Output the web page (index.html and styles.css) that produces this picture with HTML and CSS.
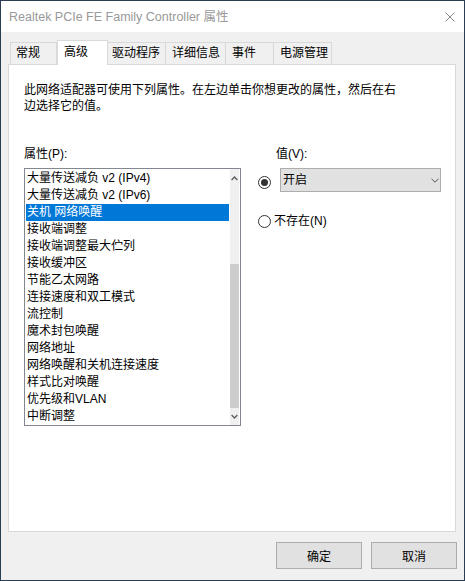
FILE: index.html
```html
<!DOCTYPE html>
<html lang="zh-CN">
<head>
<meta charset="utf-8">
<title>Realtek PCIe FE Family Controller 属性</title>
<link rel="stylesheet" href="styles.css">
</head>
<body>
<div class="window">
  <div class="titlebar">
    <span class="title">Realtek PCIe FE Family Controller 属性</span>
    <svg class="close" width="10" height="10" viewBox="0 0 10 10"><path d="M0.5 0.5 L9.5 9.5 M9.5 0.5 L0.5 9.5" stroke="#8a8a8a" stroke-width="1" fill="none"/></svg>
  </div>
  <div class="body">
    <div class="tabs">
      <div class="tab tab-general">常规</div>
      <div class="tab tab-advanced selected">高级</div>
      <div class="tab tab-driver">驱动程序</div>
      <div class="tab tab-details">详细信息</div>
      <div class="tab tab-events">事件</div>
      <div class="tab tab-power">电源管理</div>
    </div>
    <div class="panel">
      <p class="desc">此网络适配器可使用下列属性。在左边单击你想更改的属性，然后在右边选择它的值。</p>
      <div class="props">
        <div class="col-left">
          <div class="label">属性(P):</div>
          <div class="listbox">
            <div class="items">
              <div class="item">大量传送减负 v2 (IPv4)</div>
              <div class="item">大量传送减负 v2 (IPv6)</div>
              <div class="item sel">关机 网络唤醒</div>
              <div class="item">接收端调整</div>
              <div class="item">接收端调整最大伫列</div>
              <div class="item">接收缓冲区</div>
              <div class="item">节能乙太网路</div>
              <div class="item">连接速度和双工模式</div>
              <div class="item">流控制</div>
              <div class="item">魔术封包唤醒</div>
              <div class="item">网络地址</div>
              <div class="item">网络唤醒和关机连接速度</div>
              <div class="item">样式比对唤醒</div>
              <div class="item">优先级和VLAN</div>
              <div class="item">中断调整</div>
            </div>
            <div class="scrollbar">
              <div class="sb-btn sb-up"><svg width="7" height="5" viewBox="0 0 7 5"><polyline points="0.6,4 3.5,1 6.4,4" stroke="#606060" stroke-width="1.4" fill="none"/></svg></div>
              <div class="sb-track"><div class="sb-thumb"></div></div>
              <div class="sb-btn sb-down"><svg width="7" height="5" viewBox="0 0 7 5"><polyline points="0.6,1 3.5,4 6.4,1" stroke="#606060" stroke-width="1.4" fill="none"/></svg></div>
            </div>
          </div>
        </div>
        <div class="col-right">
          <div class="label value-label">值(V):</div>
          <div class="row row-value">
            <span class="radio checked"><span class="dot"></span></span>
            <div class="combo">
              <span>开启</span>
              <svg width="8" height="5" viewBox="0 0 8 5"><polyline points="0.5,0.8 4,4.2 7.5,0.8" stroke="#555" stroke-width="1" fill="none"/></svg>
            </div>
          </div>
          <div class="row row-none">
            <span class="radio"></span>
            <span class="radio-text">不存在(N)</span>
          </div>
        </div>
      </div>
    </div>
    <div class="buttons">
      <button class="btn">确定</button>
      <button class="btn">取消</button>
    </div>
  </div>
</div>
</body>
</html>
```
FILE: styles.css
```css
* { box-sizing: border-box; }
html, body { margin: 0; padding: 0; }
body {
  width: 465px;
  height: 581px;
  overflow: hidden;
  font-family: "Liberation Sans", "Noto Sans CJK SC", sans-serif;
  font-size: 12px;
  color: #000;
}
.window {
  width: 465px;
  height: 581px;
  border: 1px solid #2b3e51;
  display: flex;
  flex-direction: column;
  background: #f0f0f0;
}
.titlebar {
  height: 31px;
  flex: none;
  background: #fff;
  display: flex;
  align-items: center;
  justify-content: space-between;
  padding: 0 9px 0 8px;
}
.title { color: #999; font-size: 12.5px; line-height: 16px; }
.close { display: block; }

.body {
  flex: 1;
  display: flex;
  flex-direction: column;
  padding: 8px 8px 0 7px;
}
.tabs {
  display: flex;
  align-items: flex-end;
  height: 24px;
  padding-left: 2px;
}
.tab {
  height: 22px;
  border-top: 1px solid #d9d9d9;
  border-right: 1px solid #d9d9d9;
  line-height: 21px;
  padding-left: 6px;
  white-space: nowrap;
}
.tab-general { width: 47px; border-left: 1px solid #d9d9d9; padding-left: 5px; }
.tab-advanced { width: 51px; }
.tab-driver { width: 58px; padding-left: 4px; }
.tab-details { width: 60px; }
.tab-events { width: 48px; }
.tab-power { width: 58px; }
.tab.selected {
  height: 25px;
  margin-bottom: -1px;
  background: #fff;
  border-left: 1px solid #d9d9d9;
  line-height: 22px;
  position: relative;
  z-index: 1;
}

.panel {
  height: 468px;
  flex: none;
  background: #fff;
  border: 1px solid #d9d9d9;
  padding: 17px 15px 0 15px;
}
.desc {
  margin: 0;
  line-height: 16px;
  width: 378px;
}
.props {
  display: flex;
  margin-top: 32px;
}
.col-left { width: 217px; flex: none; }
.label { line-height: 16px; height: 16px; }
.listbox {
  margin-top: 6px;
  height: 258px;
  border: 1px solid #828790;
  background: #fff;
  display: flex;
  padding: 0 1px;
}
.items { width: 203px; flex: none; padding-top: 1px; }
.item {
  height: 17px;
  line-height: 17px;
  padding-left: 1px;
  white-space: nowrap;
}
.item.sel { background: #0078d7; color: #fff; }
.scrollbar {
  width: 9px;
  flex: none;
  margin-left: 1px;
  background: #f0f0f0;
  display: flex;
  flex-direction: column;
}
.sb-btn { display: flex; align-items: center; justify-content: center; flex: none; }
.sb-btn svg { display: block; }
.sb-up { height: 19px; }
.sb-down { height: 17px; }
.sb-track {
  flex: 1;
  display: flex;
  flex-direction: column;
  justify-content: flex-end;
}
.sb-thumb { height: 144px; background: #cdcdcd; }

.col-right { margin-left: 17px; flex: 1; }
.value-label { padding-left: 18px; }
.row { display: flex; }
.row-value { margin-top: 6px; align-items: flex-start; }
.row-value .radio { margin-top: 8px; }
.radio {
  width: 13px;
  height: 13px;
  flex: none;
  border: 1px solid #333;
  border-radius: 50%;
  background: #fff;
  display: flex;
  align-items: center;
  justify-content: center;
}
.radio .dot {
  width: 7px;
  height: 7px;
  border-radius: 50%;
  background: #333;
}
.combo {
  margin-left: 9px;
  width: 161px;
  height: 24px;
  background: #e1e1e1;
  border: 1px solid #adadad;
  display: flex;
  align-items: center;
  justify-content: space-between;
  padding: 0 1px 0 2px;
  line-height: 16px;
}
.combo svg { display: block; }
.row-none {
  margin-top: 21px;
  align-items: center;
  line-height: 16px;
  height: 16px;
}
.radio-text { margin-left: 3px; }

.buttons {
  display: flex;
  justify-content: flex-end;
  gap: 9px;
  margin-top: 10px;
  margin-right: -1px;
}
.btn {
  width: 86px;
  height: 27px;
  margin: 0;
  padding: 0;
  background: #e1e1e1;
  border: 1px solid #adadad;
  border-radius: 0;
  font-family: "Liberation Sans", "Noto Sans CJK SC", sans-serif;
  font-size: 12px;
  color: #000;
}
```
